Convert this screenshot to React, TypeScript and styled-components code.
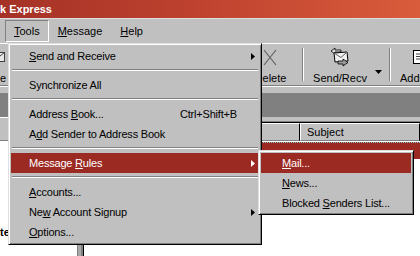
import React from 'react'
import styled, { createGlobalStyle } from 'styled-components'

const GlobalStyle = createGlobalStyle`
  html, body {
    margin: 0;
    padding: 0;
    background: #fff;
    overflow: hidden;
  }
  body {
    font-family: "Liberation Sans", Arial, sans-serif;
    font-size: 11px;
    color: #000;
  }
`

const colors = {
  face: '#c0c0c0',
  shadow: '#808080',
  light: '#ffffff',
  highlight: '#9b2a23',
}

const Window = styled.div`
  position: relative;
  width: 420px;
  height: 256px;
  overflow: hidden;
  display: flex;
  flex-direction: column;
  background: #fff;
`

const TitleBar = styled.div`
  flex: none;
  height: 18px;
  line-height: 18px;
  background: linear-gradient(90deg, #a43227 0%, #bd412e 45%, #d95c3c 100%);
  color: #fff;
  font-weight: bold;
  font-size: 11px;
  white-space: nowrap;
`

const MenuBar = styled.div`
  flex: none;
  height: 24px;
  display: flex;
  align-items: center;
  padding-left: 5px;
  background: ${colors.face};
  border-top: 1px solid #dfdfdf;
`

const MenuBarItem = styled.div<{ $open?: boolean }>`
  height: 20px;
  line-height: 20px;
  padding: 0 8px;
  border: 1px solid transparent;
  ${(p) => p.$open && `border-color: ${colors.shadow} ${colors.light} ${colors.light} ${colors.shadow};`}
`

const Toolbar = styled.div`
  flex: none;
  height: 41px;
  display: flex;
  background: ${colors.face};
  border-top: 1px solid ${colors.light};
  border-bottom: 1px solid ${colors.shadow};
`

const ToolButton = styled.div<{ $width: number; $start?: boolean; $inset?: number }>`
  flex: none;
  box-sizing: border-box;
  width: ${(p) => p.$width}px;
  display: flex;
  flex-direction: column;
  align-items: ${(p) => (p.$start ? 'flex-start' : 'center')};
  padding-top: 3px;
  padding-left: ${(p) => p.$inset ?? 0}px;
  white-space: nowrap;
  overflow: hidden;
`

const ToolIcon = styled.div<{ $shift?: number }>`
  width: 20px;
  height: 20px;
  margin-bottom: 5px;
  margin-left: ${(p) => p.$shift ?? 0}px;
  flex: none;
`

const ToolLabel = styled.div`
  line-height: 12px;
  font-size: 11px;
`

const SplitButton = styled.div`
  flex: none;
  display: flex;
`

const DropArrow = styled.div`
  width: 13px;
  padding-top: 20px;
  padding-left: 2px;
  box-sizing: border-box;
`

const ToolSep = styled.div`
  flex: none;
  width: 0;
  margin: 4px 3px;
  border-left: 1px solid ${colors.shadow};
  border-right: 1px solid ${colors.light};
`

const Main = styled.div`
  flex: 1;
  display: flex;
  flex-direction: column;
  background: ${colors.face};
  padding-top: 6px;
  border-top: 1px solid ${colors.light};
  min-height: 0;
`

const FolderBar = styled.div`
  flex: none;
  height: 24px;
  background: ${colors.shadow};
`

const Content = styled.div`
  flex: 1;
  display: flex;
  min-height: 0;
`

const FolderPane = styled.div`
  flex: none;
  width: 77px;
  display: flex;
  flex-direction: column;
  background: #fff;
`

const PaneHeader = styled.div`
  flex: none;
  height: 22px;
  background: ${colors.face};
  border-top: 1px solid ${colors.light};
  border-bottom: 1px solid ${colors.shadow};
`

const FolderList = styled.div`
  flex: 1;
  display: flex;
  flex-direction: column;
  justify-content: flex-end;
  padding-bottom: 17px;
`

const FolderLabel = styled.div`
  font-weight: bold;
  line-height: 13px;
  white-space: nowrap;
`

const Splitter = styled.div`
  flex: none;
  width: 3px;
  background: #a8a8a8;
  border-left: 1px solid ${colors.shadow};
  border-right: 1px solid ${colors.shadow};
`

const MessagePane = styled.div`
  flex: 1;
  display: flex;
  flex-direction: column;
  padding-top: 4px;
  min-width: 0;
`

const ListView = styled.div`
  flex: 1;
  background: #fff;
  border-top: 1px solid ${colors.shadow};
  border-left: 1px solid ${colors.shadow};
  box-shadow: inset 1px 1px 0 #000;
  padding: 1px 0 0 1px;
`

const HeaderRow = styled.div`
  display: flex;
  height: 18px;
`

const HeaderCell = styled.div<{ $width?: number }>`
  ${(p) => (p.$width ? `flex: none; width: ${p.$width}px;` : 'flex: 1;')}
  box-sizing: border-box;
  height: 18px;
  line-height: 16px;
  padding-left: 6px;
  background: ${colors.face};
  border-top: 1px solid ${colors.light};
  border-left: 1px solid ${colors.light};
  border-right: 1px solid #000;
  border-bottom: 1px solid ${colors.shadow};
  white-space: nowrap;
  overflow: hidden;
`

const MessageRow = styled.div<{ $selected?: boolean }>`
  margin-top: 1px;
  height: 16px;
  border-top: 1px dotted ${(p) => (p.$selected ? '#7fcbd6' : 'transparent')};
  background: ${(p) => (p.$selected ? colors.highlight : '#fff')};
`

const Popup = styled.div`
  position: absolute;
  box-sizing: border-box;
  background: ${colors.face};
  padding: 2px;
  border: 1px solid;
  border-color: #dfdfdf #000 #000 #dfdfdf;
  box-shadow: inset 1px 1px 0 ${colors.light}, inset -1px -1px 0 ${colors.shadow};
  letter-spacing: -0.2px;
`

const ItemLabel = styled.span`
  white-space: nowrap;
`

const Shortcut = styled.span`
  flex: 1;
  white-space: nowrap;
`

const MainMenu = styled(Popup)`
  left: 8px;
  top: 43px;
  width: 254px;
  ${ItemLabel} {
    flex: none;
    width: 151px;
  }
`

const SubMenu = styled(Popup)`
  left: 258px;
  top: 150px;
  width: 156px;
  padding-bottom: 1px;
`

const MenuItem = styled.div<{ $active?: boolean; $indent?: number }>`
  display: flex;
  align-items: center;
  height: 20px;
  padding-left: ${(p) => p.$indent ?? 18}px;
  background: ${(p) => (p.$active ? colors.highlight : 'transparent')};
  color: ${(p) => (p.$active ? '#fff' : '#000')};
`

const SubArrow = styled.svg`
  flex: none;
  margin-left: auto;
  margin-right: 4px;
`

const MenuSep = styled.div`
  height: 0;
  margin: 3px 1px 4px;
  border-top: 1px solid ${colors.shadow};
  border-bottom: 1px solid ${colors.light};
`

const Arrow = () => (
  <SubArrow width="4" height="7" viewBox="0 0 4 7">
    <path d="M0 0 L4 3.5 L0 7 Z" fill="currentColor" />
  </SubArrow>
)

const DeleteIcon = () => (
  <svg width="20" height="20" viewBox="0 0 20 20">
    <path d="M3 3 L15 18 M15 3 L3 18" stroke="#606060" strokeWidth="1.2" fill="none" />
  </svg>
)

const SendRecvIcon = () => (
  <svg width="20" height="20" viewBox="0 0 20 20">
    <path d="M1 4 L5 1 L5 3 L11 3 L11 5 L5 5 L5 7 Z" fill="#d8d8d8" stroke="#000" strokeWidth="0.8" />
    <path d="M4 6 L17 5 L18 14 L5 15 Z" fill="#f0f0f0" stroke="#000" strokeWidth="1" />
    <path d="M4 6 L11 10.5 L17 5" fill="none" stroke="#606060" strokeWidth="1" />
    <path d="M8 14 L13 14 L13 12 L18 15.5 L13 19 L13 17 L8 17 Z" fill="#9a9a9a" stroke="#000" strokeWidth="0.8" />
  </svg>
)

const AddressIcon = () => (
  <svg width="20" height="20" viewBox="0 0 20 20">
    <rect x="2.5" y="3.5" width="12" height="13" fill="#fff" stroke="#000" />
    <path d="M5 7 H12 M5 9.5 H12 M5 12 H10" stroke="#404040" />
  </svg>
)

const MailIcon = () => (
  <svg width="20" height="20" viewBox="0 0 20 20">
    <rect x="2.5" y="5.5" width="14" height="9" fill="#e8e8e8" stroke="#404040" />
    <path d="M2.5 5.5 L9.5 11 L16.5 5.5" stroke="#404040" fill="none" />
  </svg>
)

const DownArrow = () => (
  <svg width="7" height="4" viewBox="0 0 7 4">
    <path d="M0 0 H7 L3.5 4 Z" fill="#000" />
  </svg>
)

export default function App() {
  // buttons covered by the open menu: only their space matters
  const coveredWidths = [58, 58, 58, 60]

  return (
    <>
      <GlobalStyle />
      <Window>
        <TitleBar>k Express</TitleBar>
        <MenuBar>
          <MenuBarItem $open>
            <u>T</u>ools
          </MenuBarItem>
          <MenuBarItem>
            <u>M</u>essage
          </MenuBarItem>
          <MenuBarItem>
            <u>H</u>elp
          </MenuBarItem>
        </MenuBar>

        <Toolbar>
          <ToolButton $width={8} $start>
            <ToolIcon $shift={-12}>
              <MailIcon />
            </ToolIcon>
            <ToolLabel>e</ToolLabel>
          </ToolButton>
          {coveredWidths.map((w, i) => (
            <ToolButton key={i} $width={w} />
          ))}
          <ToolButton $width={57}>
            <ToolIcon>
              <DeleteIcon />
            </ToolIcon>
            <ToolLabel>Delete</ToolLabel>
          </ToolButton>
          <ToolSep />
          <SplitButton>
            <ToolButton $width={66}>
              <ToolIcon>
                <SendRecvIcon />
              </ToolIcon>
              <ToolLabel>Send/Recv</ToolLabel>
            </ToolButton>
            <DropArrow>
              <DownArrow />
            </DropArrow>
          </SplitButton>
          <ToolSep />
          <ToolButton $width={60} $start $inset={6}>
            <ToolIcon $shift={11}>
              <AddressIcon />
            </ToolIcon>
            <ToolLabel>Addresses</ToolLabel>
          </ToolButton>
        </Toolbar>

        <Main>
          <FolderBar />
          <Content>
            <FolderPane>
              <PaneHeader />
              <FolderList>
                <FolderLabel>te</FolderLabel>
              </FolderList>
            </FolderPane>
            <Splitter />
            <MessagePane>
              <ListView>
                <HeaderRow>
                  <HeaderCell $width={18} />
                  <HeaderCell $width={18} />
                  <HeaderCell $width={18} />
                  <HeaderCell $width={162} />
                  <HeaderCell>Subject</HeaderCell>
                </HeaderRow>
                <MessageRow $selected />
              </ListView>
            </MessagePane>
          </Content>
        </Main>

        <MainMenu>
          <MenuItem>
            <ItemLabel>
              <u>S</u>end and Receive
            </ItemLabel>
            <Arrow />
          </MenuItem>
          <MenuSep />
          <MenuItem>
            <ItemLabel>Synchronize All</ItemLabel>
          </MenuItem>
          <MenuSep />
          <MenuItem>
            <ItemLabel>
              Address <u>B</u>ook...
            </ItemLabel>
            <Shortcut>Ctrl+Shift+B</Shortcut>
          </MenuItem>
          <MenuItem>
            <ItemLabel>
              A<u>d</u>d Sender to Address Book
            </ItemLabel>
          </MenuItem>
          <MenuSep />
          <MenuItem $active>
            <ItemLabel>
              Message <u>R</u>ules
            </ItemLabel>
            <Arrow />
          </MenuItem>
          <MenuSep />
          <MenuItem>
            <ItemLabel>
              <u>A</u>ccounts...
            </ItemLabel>
          </MenuItem>
          <MenuItem>
            <ItemLabel>
              Ne<u>w</u> Account Signup
            </ItemLabel>
            <Arrow />
          </MenuItem>
          <MenuItem>
            <ItemLabel>
              <u>O</u>ptions...
            </ItemLabel>
          </MenuItem>
        </MainMenu>

        <SubMenu>
          <MenuItem $active $indent={21}>
            <ItemLabel>
              <u>M</u>ail...
            </ItemLabel>
          </MenuItem>
          <MenuItem $indent={21}>
            <ItemLabel>
              <u>N</u>ews...
            </ItemLabel>
          </MenuItem>
          <MenuItem $indent={21}>
            <ItemLabel>
              Blocked <u>S</u>enders List...
            </ItemLabel>
          </MenuItem>
        </SubMenu>
      </Window>
    </>
  )
}
